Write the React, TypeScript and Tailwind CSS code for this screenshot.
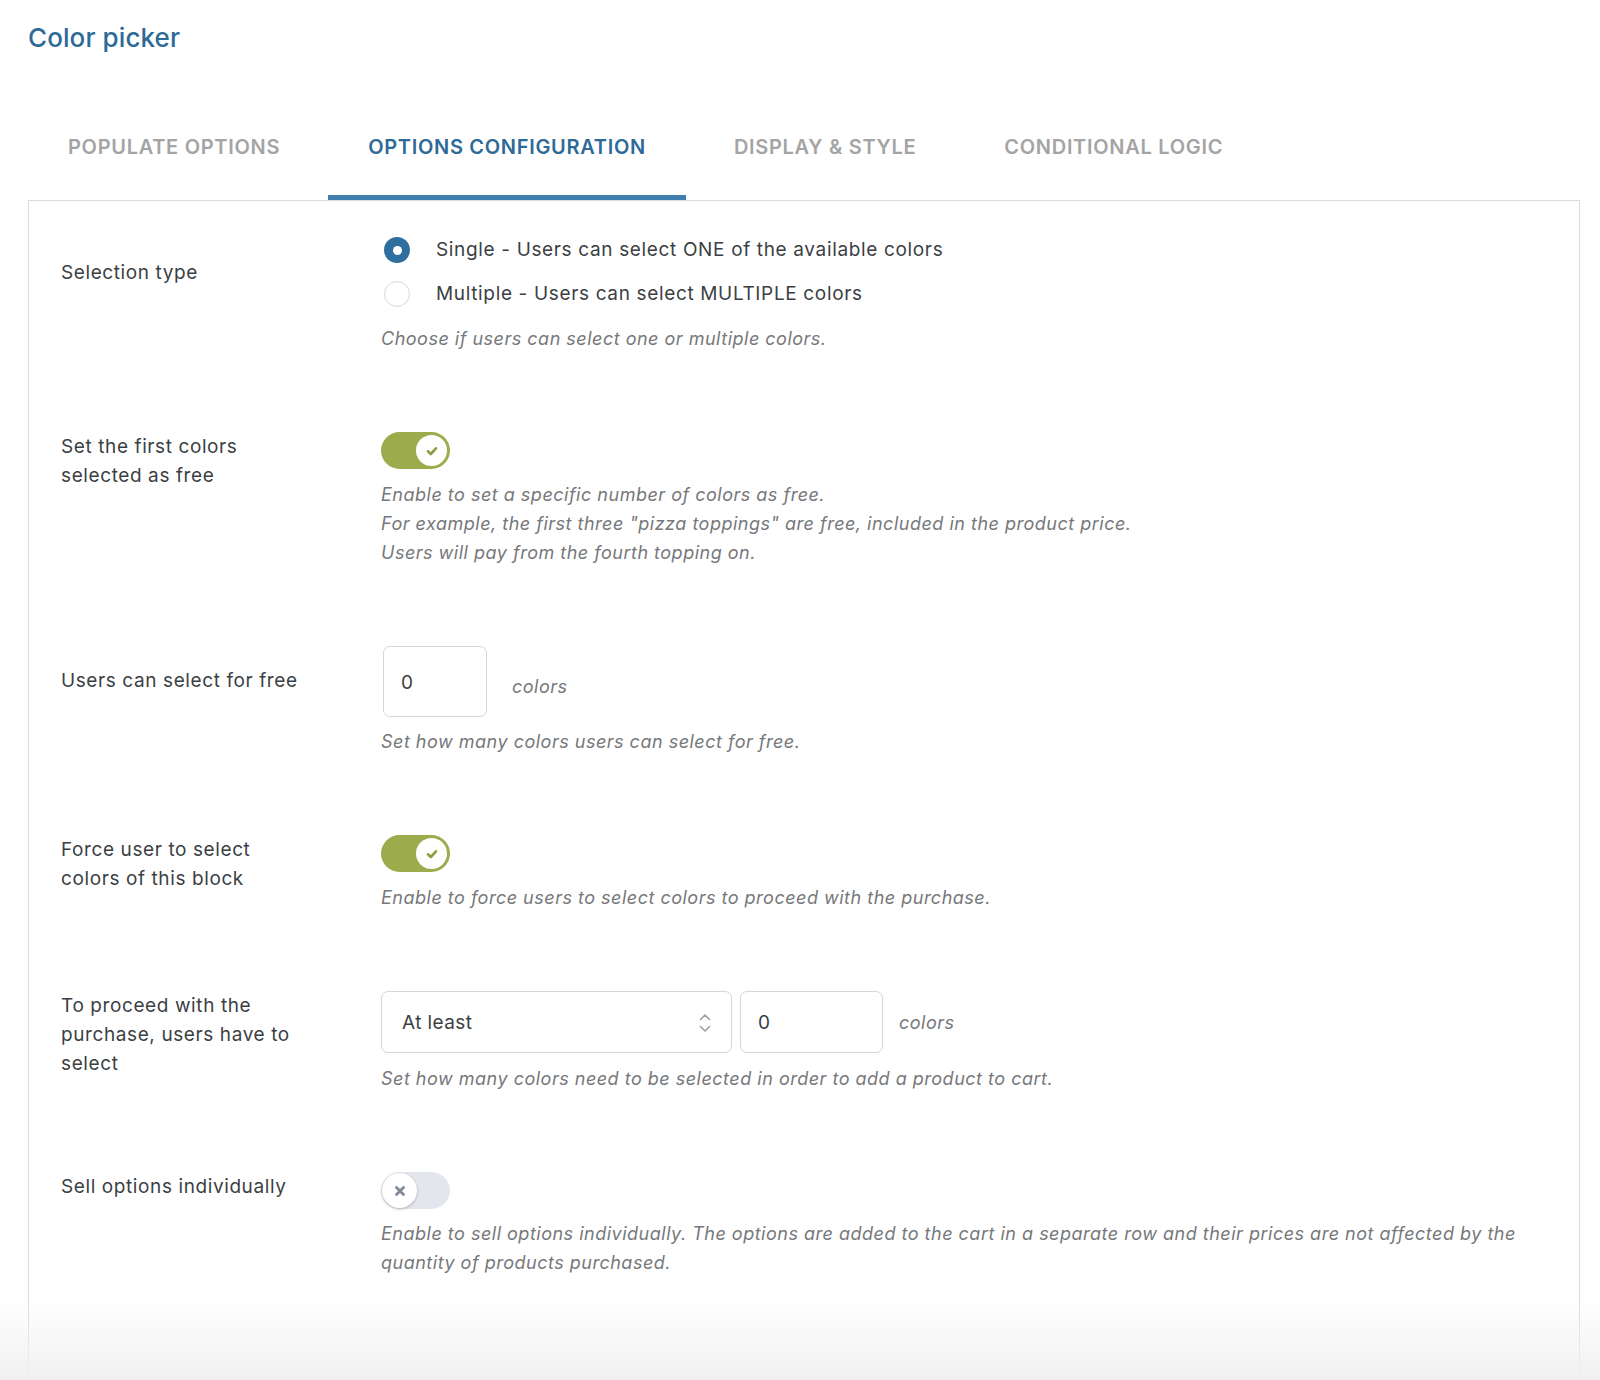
import React from "react";

const font = { fontFamily: "Inter, 'Noto Sans', sans-serif" };

function Toggle({ on }: { on: boolean }) {
  if (on) {
    return (
      <div className="w-[69px] h-[37px] rounded-full bg-[#9cab4c] flex items-center justify-end pr-[3px]">
        <div className="w-[31px] h-[31px] rounded-full bg-white flex items-center justify-center">
          <svg width="14" height="14" viewBox="0 0 14 14" fill="none">
            <path d="M3 7.3 L5.8 10 L11 4.3" stroke="#8e9d3c" strokeWidth="2.6" strokeLinecap="round" strokeLinejoin="round" />
          </svg>
        </div>
      </div>
    );
  }
  return (
    <div className="w-[69px] h-[37px] rounded-full bg-[#e3e7ed] flex items-center justify-start pl-[1px]">
      <div className="w-[35px] h-[35px] rounded-full bg-white flex items-center justify-center shadow-[0_1px_3px_rgba(0,0,0,0.25)]">
        <svg width="12" height="12" viewBox="0 0 12 12" fill="none">
          <path d="M2.5 2.5 L9.5 9.5 M9.5 2.5 L2.5 9.5" stroke="#7f8896" strokeWidth="2.8" strokeLinecap="round" />
        </svg>
      </div>
    </div>
  );
}

function Help({ children }: { children: React.ReactNode }) {
  return <div className="text-[18px] leading-[29px] italic text-[#76787b] tracking-[0.5px]">{children}</div>;
}

function Label({ children, className = "" }: { children: React.ReactNode; className?: string }) {
  return (
    <div className={"w-[321px] shrink-0 pl-[1px] text-[19px] leading-[29px] text-[#3b3f44] tracking-[0.6px] " + className}>
      {children}
    </div>
  );
}

export default function App() {
  return (
    <div className="relative h-[1380px] overflow-hidden bg-white flex flex-col px-[28px]" style={font}>
      <h1 className="mt-[22px] h-[32px] leading-[32px] text-[26px] font-medium text-[#2e6a98] tracking-[0.1px]">
        Color picker
      </h1>

      <div className="mt-[46px] flex gap-[8px]">
        {[
          ["POPULATE OPTIONS", false],
          ["OPTIONS CONFIGURATION", true],
          ["DISPLAY & STYLE", false],
          ["CONDITIONAL LOGIC", false],
        ].map(([t, a]) => (
          <div
            key={t as string}
            className={
              "px-[40px] pt-[35px] pb-[36px] text-[20px] leading-[24px] font-semibold tracking-[0.7px] border-b-[5px] " +
              (a ? "text-[#2e6a98] border-[#3f7fae]" : "text-[#a4a4a4] border-transparent")
            }
          >
            {t as string}
          </div>
        ))}
      </div>

      <div className="flex-1 border border-[#dcdcdc] border-b-0 mr-[-8px] pl-[31px] pr-[31px] pt-[27px] flex flex-col gap-[79px]">
        {/* Row 1 */}
        <div className="flex">
          <Label className="mt-[30px]">Selection type</Label>
          <div className="flex-1">
            <div className="flex items-center h-[44px] gap-[26px] pl-[3px]">
              <div className="w-[26px] h-[26px] rounded-full bg-[#2f6f9f] flex items-center justify-center">
                <div className="w-[9px] h-[9px] rounded-full bg-white" />
              </div>
              <span className="text-[19px] text-[#3b3f44] tracking-[0.65px]">Single - Users can select ONE of the available colors</span>
            </div>
            <div className="flex items-center h-[44px] gap-[26px] pl-[3px]">
              <div className="w-[26px] h-[26px] rounded-full border border-[#d8d8d8] bg-white" />
              <span className="text-[19px] text-[#3b3f44] tracking-[0.65px]">Multiple - Users can select MULTIPLE colors</span>
            </div>
            <div className="mt-[8px]">
              <Help>Choose if users can select one or multiple colors.</Help>
            </div>
          </div>
        </div>

        {/* Row 2 */}
        <div className="flex">
          <Label>
            Set the first colors
            <br />
            selected as free
          </Label>
          <div className="flex-1">
            <Toggle on />
            <div className="mt-[11px]">
              <Help>
                Enable to set a specific number of colors as free.
                <br />
                For example, the first three "pizza toppings" are free, included in the product price.
                <br />
                Users will pay from the fourth topping on.
              </Help>
            </div>
          </div>
        </div>

        {/* Row 3 */}
        <div className="flex">
          <Label className="mt-[20px]">Users can select for free</Label>
          <div className="flex-1">
            <div className="flex items-center">
              <div className="ml-[2px] w-[104px] h-[71px] rounded-[7px] border border-[#d6d6d6] flex items-center pl-[17px] pt-[3px] text-[19px] text-[#3b3f44]">
                0
              </div>
              <span className="ml-[25px] mt-[10px] text-[18px] italic text-[#76787b] tracking-[0.5px]">colors</span>
            </div>
            <div className="mt-[10px]">
              <Help>Set how many colors users can select for free.</Help>
            </div>
          </div>
        </div>

        {/* Row 4 */}
        <div className="flex">
          <Label>
            Force user to select
            <br />
            colors of this block
          </Label>
          <div className="flex-1">
            <Toggle on />
            <div className="mt-[11px]">
              <Help>Enable to force users to select colors to proceed with the purchase.</Help>
            </div>
          </div>
        </div>

        {/* Row 5 */}
        <div className="flex">
          <Label>
            To proceed with the
            <br />
            purchase, users have to
            <br />
            select
          </Label>
          <div className="flex-1">
            <div className="flex items-center">
              <div className="w-[351px] h-[62px] rounded-[7px] border border-[#d6d6d6] flex items-center justify-between pl-[20px] pr-[18px] pt-[2px] text-[19px] text-[#3b3f44] tracking-[0.4px]">
                <span>At least</span>
                <svg width="16" height="24" viewBox="0 0 16 24" fill="none">
                  <path d="M3.5 8.5 L8 4 L12.5 8.5" stroke="#9aa0a8" strokeWidth="1.6" strokeLinecap="round" strokeLinejoin="round" />
                  <path d="M3.5 15.5 L8 20 L12.5 15.5" stroke="#9aa0a8" strokeWidth="1.6" strokeLinecap="round" strokeLinejoin="round" />
                </svg>
              </div>
              <div className="ml-[8px] w-[143px] h-[62px] rounded-[7px] border border-[#d6d6d6] flex items-center pl-[17px] pt-[2px] text-[19px] text-[#3b3f44]">
                0
              </div>
              <span className="ml-[16px] text-[18px] italic text-[#76787b] tracking-[0.5px]">colors</span>
            </div>
            <div className="mt-[11px]">
              <Help>Set how many colors need to be selected in order to add a product to cart.</Help>
            </div>
          </div>
        </div>

        {/* Row 6 */}
        <div className="flex">
          <Label>Sell options individually</Label>
          <div className="flex-1">
            <Toggle on={false} />
            <div className="mt-[10px]">
              <Help>
                Enable to sell options individually. The options are added to the cart in a separate row and their prices are not affected by the quantity of products purchased.
              </Help>
            </div>
          </div>
        </div>
      </div>

      <div className="pointer-events-none absolute left-0 right-0 bottom-0 h-[80px] bg-gradient-to-b from-transparent to-[#f0f0f0]" />
    </div>
  );
}
